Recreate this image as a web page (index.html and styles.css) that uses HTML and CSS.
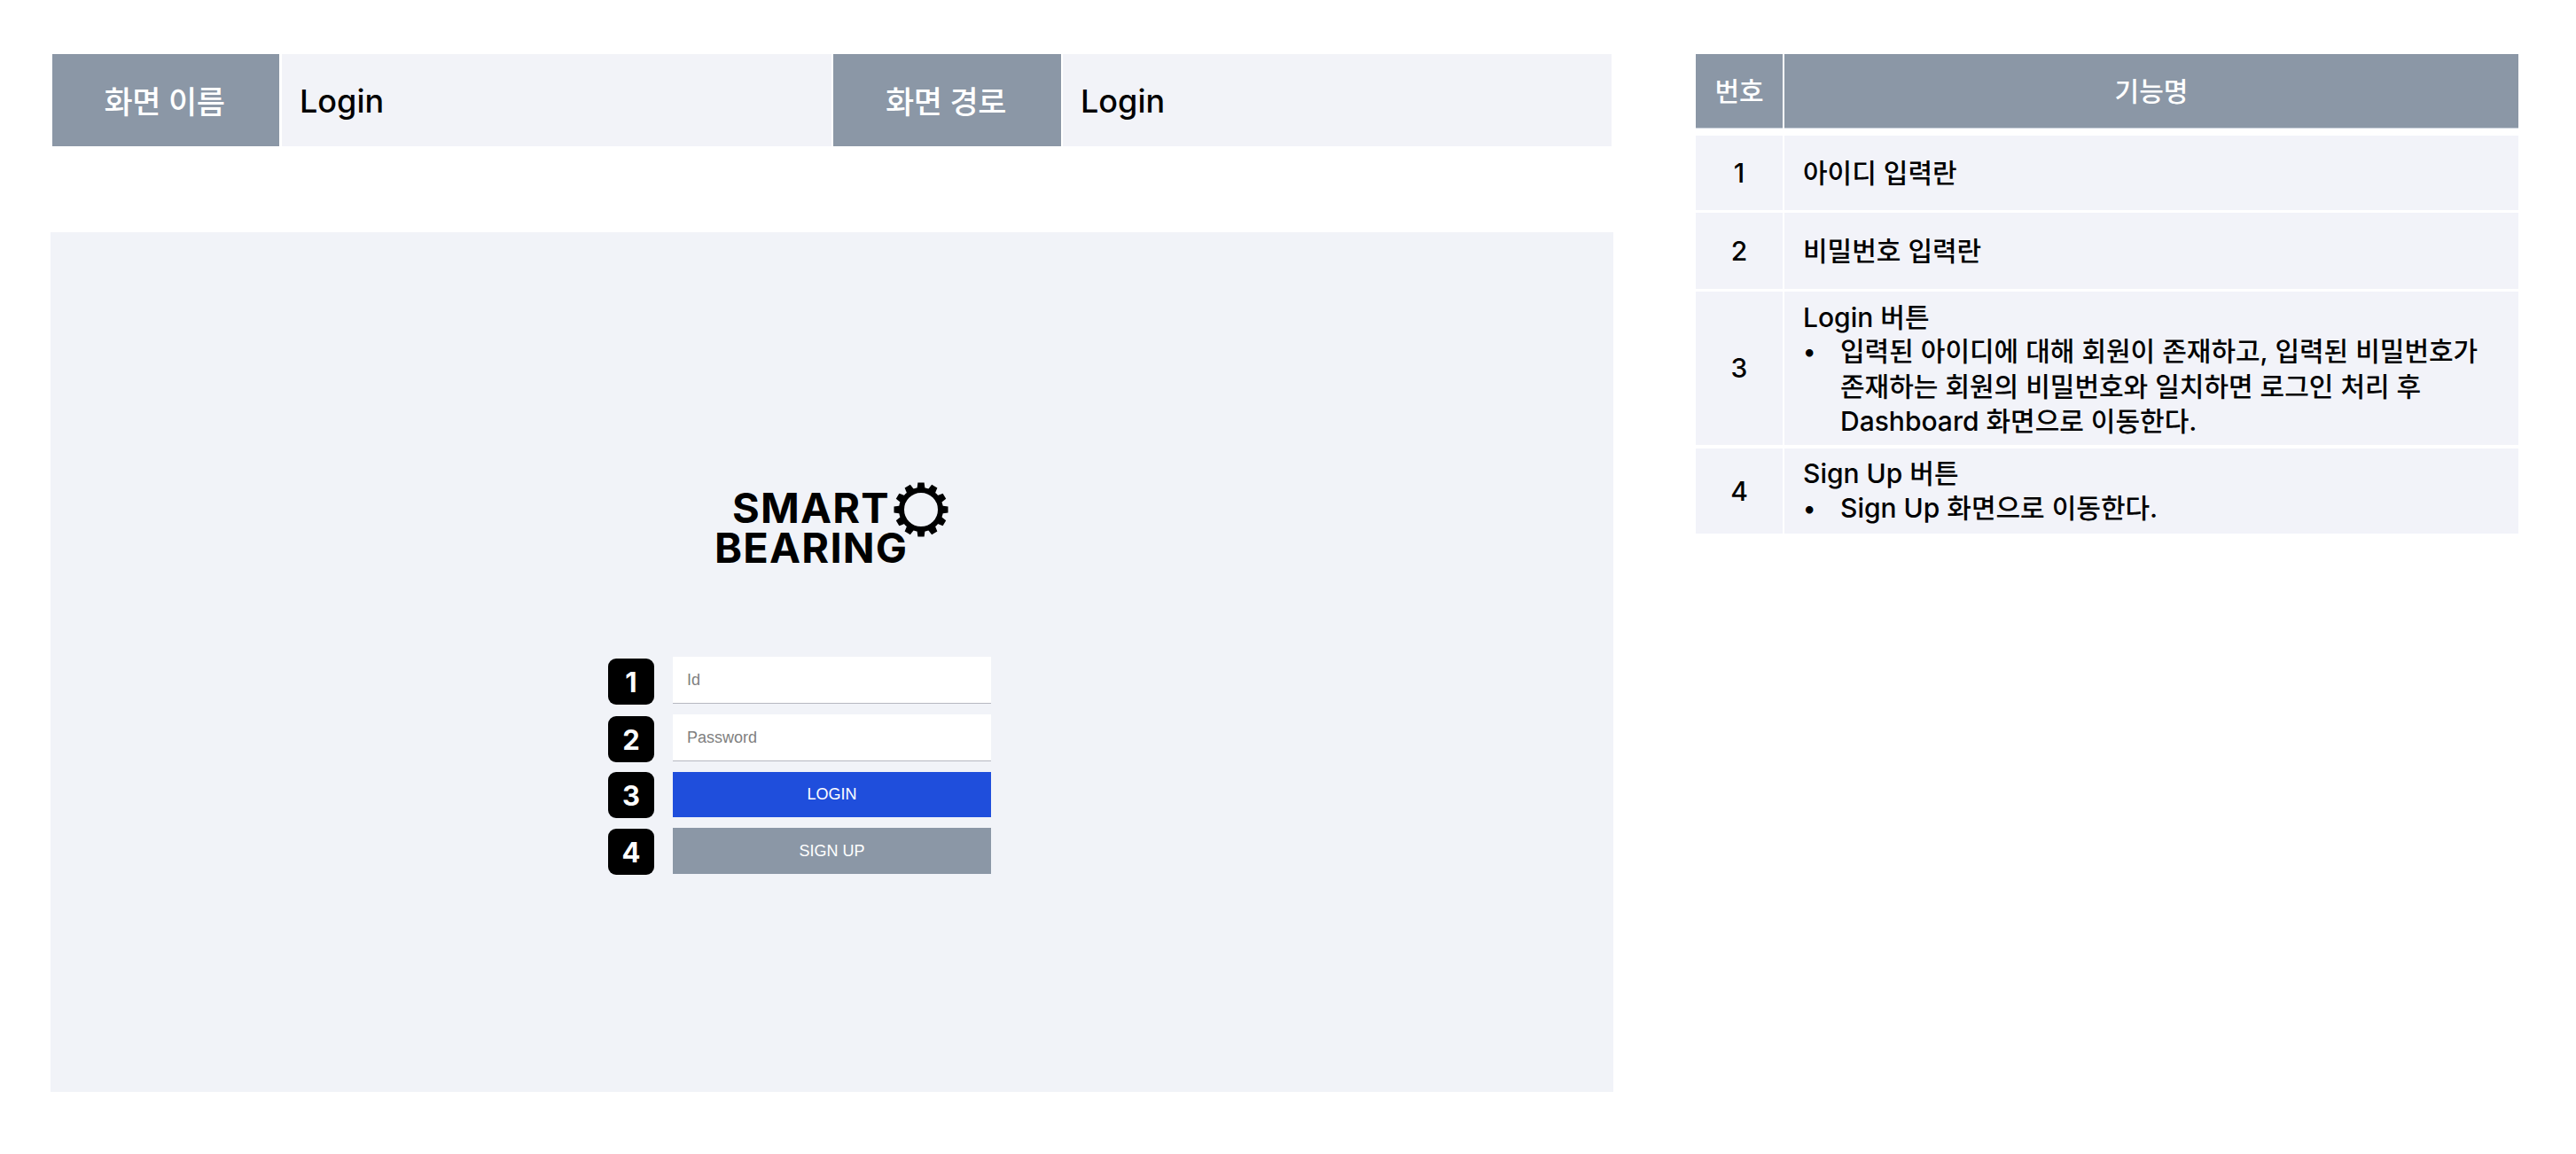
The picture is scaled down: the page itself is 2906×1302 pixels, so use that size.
FILE: index.html
```html
<!DOCTYPE html>
<html lang="ko">
<head>
<meta charset="utf-8">
<title>Login</title>
<link rel="stylesheet" href="styles.css">
</head>
<body>
<main class="page">
  <section class="left">
    <div class="info-bar">
      <div class="info-label label-first">화면 이름</div>
      <div class="info-value value-first">Login</div>
      <div class="info-label label-second">화면 경로</div>
      <div class="info-value value-second">Login</div>
    </div>
    <div class="canvas">
      <div class="logo">
        <div class="logo-top">
          <span class="logo-word logo-upper">SMART</span>
          <svg class="gear" viewBox="0 0 62 62" aria-hidden="true">
            <circle cx="31" cy="31" r="22" fill="none" stroke="#000" stroke-width="6"/>
            <g id="teeth">
              <path id="t" d="M27.4 0.5h7.2l1 7.5h-9.2z"/>
              <use href="#t" transform="rotate(30 31 31)"/>
              <use href="#t" transform="rotate(60 31 31)"/>
              <use href="#t" transform="rotate(90 31 31)"/>
              <use href="#t" transform="rotate(120 31 31)"/>
              <use href="#t" transform="rotate(150 31 31)"/>
              <use href="#t" transform="rotate(180 31 31)"/>
              <use href="#t" transform="rotate(210 31 31)"/>
              <use href="#t" transform="rotate(240 31 31)"/>
              <use href="#t" transform="rotate(270 31 31)"/>
              <use href="#t" transform="rotate(300 31 31)"/>
              <use href="#t" transform="rotate(330 31 31)"/>
            </g>
          </svg>
        </div>
        <div class="logo-word logo-bottom">BEARING</div>
      </div>
      <div class="form">
        <div class="field row-1"><span class="badge">1</span>Id</div>
        <div class="field row-2"><span class="badge">2</span>Password</div>
        <div class="btn btn-login row-3"><span class="badge">3</span>LOGIN</div>
        <div class="btn btn-signup row-4"><span class="badge">4</span>SIGN UP</div>
      </div>
    </div>
  </section>
  <section class="spec">
    <div class="head num-cell">번호</div>
    <div class="head">기능명</div>

    <div class="cell num-cell r1">1</div>
    <div class="cell text-cell r1">아이디 입력란</div>

    <div class="cell num-cell">2</div>
    <div class="cell text-cell">비밀번호 입력란</div>

    <div class="cell num-cell">3</div>
    <div class="cell text-cell t3">
      <div>Login 버튼</div>
      <ul class="bullets">
        <li>입력된 아이디에 대해 회원이 존재하고, 입력된 비밀번호가<br>존재하는 회원의 비밀번호와 일치하면 로그인 처리 후<br>Dashboard 화면으로 이동한다.</li>
      </ul>
    </div>

    <div class="cell num-cell r4">4</div>
    <div class="cell text-cell r4">
      <div>Sign Up 버튼</div>
      <ul class="bullets">
        <li>Sign Up 화면으로 이동한다.</li>
      </ul>
    </div>
  </section>
</main>
</body>
</html>
```
FILE: styles.css
```css
* { box-sizing: border-box; }
html, body { margin: 0; padding: 0; background: #fff; }
body {
  width: 2906px;
  height: 1302px;
  overflow: hidden;
  font-family: Inter, "Noto Sans CJK KR", sans-serif;
  color: #000;
}
.page {
  display: flex;
  align-items: flex-start;
  gap: 93px;
  padding: 61px 0 0 57px;
}
.left { width: 1763px; }

/* top information bar */
.info-bar {
  display: grid;
  grid-template-columns: 256px 625px 257px 621px;
  height: 104px;
  margin-left: 2px;
  font-size: 36px;
  line-height: 1;
}
.info-label {
  display: flex;
  align-items: center;
  justify-content: center;
  padding: 4px 3px 0 0;
  background: #8b97a6;
  color: #fff;
  font-size: 35px;
  font-weight: 500;
  letter-spacing: -0.4px;
}
.info-value {
  display: flex;
  align-items: center;
  padding: 2px 0 0 20px;
  background: #f2f3f8;
  font-size: 36px;
  font-weight: 500;
}
.value-first { margin-left: 3px; margin-right: 2px; }
.value-second { margin-left: 2px; }

/* canvas */
.canvas {
  height: 970px;
  margin-top: 97px;
  padding-top: 281px;
  background: #f1f3f8;
  display: flex;
  flex-direction: column;
  align-items: center;
}
.logo { width: 263px; }
.logo-top {
  display: flex;
  align-items: center;
  justify-content: space-between;
  padding-left: 19px;
  height: 62px;
}
.logo-word {
  font-family: Inter, sans-serif;
  font-weight: 700;
  font-size: 47px;
  line-height: 34px;
  letter-spacing: 1.2px;
  white-space: nowrap;
}
.logo-upper { margin-bottom: 3px; }
.logo-bottom { margin: -4px 0 0 -1px; }
.gear { width: 62px; height: 62px; margin-top: 2px; display: block; }

/* login form */
.form {
  width: 359px;
  margin-top: 106px;
  display: flex;
  flex-direction: column;
  gap: 12px;
  font-family: "Liberation Sans", Arial, sans-serif;
  font-size: 18px;
}
.field, .btn {
  position: relative;
  display: flex;
  align-items: center;
}
.field {
  height: 53px;
  padding: 1px 0 0 16px;
  background: #fff;
  border-bottom: 1px solid #b6b8c0;
  color: #808080;
}
.btn {
  justify-content: center;
  color: #fff;
}
.btn-login { height: 51px; background: #1f4edc; }
.btn-signup { height: 52px; background: #8b97a6; }
.badge {
  position: absolute;
  left: -73px;
  top: 2px;
  width: 52px;
  height: 52px;
  display: flex;
  align-items: center;
  justify-content: center;
  border-radius: 9px;
  background: #000;
  color: #fff;
  font-family: Inter, sans-serif;
  font-size: 31px;
  font-weight: 700;
  line-height: 1;
}
.row-3 .badge { top: 0; }
.row-4 .badge { top: 1px; }

/* function table */
.spec {
  width: 928px;
  display: grid;
  grid-template-columns: 98px 828px;
  grid-template-rows: 84px 89px 86px 173px 97px;
  column-gap: 2px;
  row-gap: 3px;
  font-size: 30px;
  font-weight: 500;
  line-height: 38.7px;
}
.head {
  display: flex;
  align-items: center;
  justify-content: center;
  padding-top: 2px;
  background: #8b97a6;
  border-bottom: 1px solid #c3cad6;
  color: #fff;
}
.cell { background: #f2f3f9; }
.num-cell {
  display: flex;
  align-items: center;
  justify-content: center;
}
.text-cell {
  display: flex;
  flex-direction: column;
  justify-content: center;
  padding-left: 21px;
}
.t3 { padding-top: 2px; }
.r1 { margin-top: 5px; }
.r4 { margin-top: 1px; }
.bullets { list-style: none; margin: 0; padding: 0; }
.bullets li { padding-left: 42px; text-indent: -42px; }
.bullets li::before {
  content: "•";
  display: inline-block;
  width: 42px;
  text-indent: 0;
  font-size: 27px;
  vertical-align: 1px;
}
```
